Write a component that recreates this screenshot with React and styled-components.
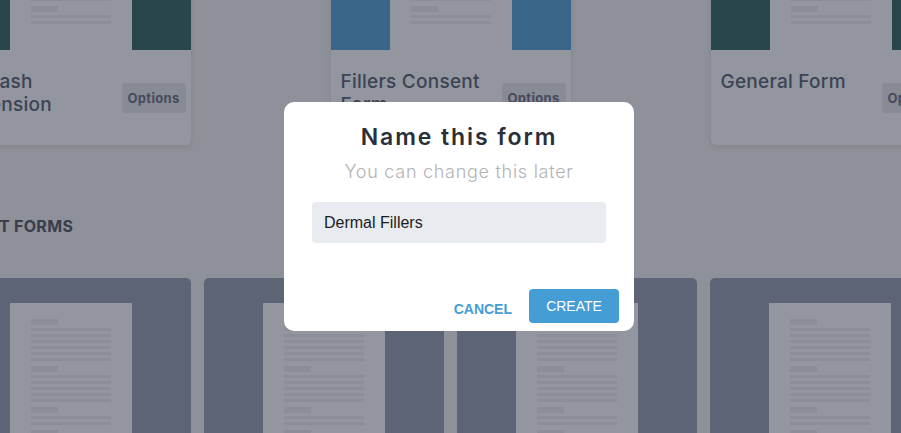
import React from "react";
import styled, { createGlobalStyle } from "styled-components";

const GlobalStyle = createGlobalStyle`
  html, body {
    margin: 0;
    padding: 0;
    overflow: hidden;
    background: #eaebed;
  }
  body {
    font-family: Inter, "Noto Sans", sans-serif;
  }
  * { box-sizing: border-box; }
`;

const Viewport = styled.div`
  width: 100vw;
  height: 100vh;
  overflow: hidden;
  position: relative;
`;

const Page = styled.main`
  width: 1000px;
  margin-left: calc(50% - 500px);
  margin-top: -110px;
`;

const FeaturedRow = styled.section`
  display: flex;
  justify-content: space-between;
`;

const FeaturedCard = styled.article`
  width: 240px;
  border-radius: 5px;
  overflow: hidden;
  background: #f3f4f6;
  box-shadow: 0 2px 6px rgba(0, 0, 0, 0.1);
`;

const Thumb = styled.div`
  height: 160px;
  padding-top: 25px;
  display: flex;
  justify-content: center;
  background: ${(p) => p.$tone};
`;

const CardBody = styled.div`
  height: 95px;
  display: flex;
  align-items: center;
  justify-content: space-between;
  padding: 0 5px 0 10px;
`;

const CardTitle = styled.h3`
  align-self: flex-start;
  margin: 20px 0 0;
  max-width: 160px;
  font-size: 19px;
  line-height: 23px;
  font-weight: 500;
  letter-spacing: 0.25px;
  color: #535d72;
`;

const OptionsButton = styled.button`
  flex: none;
  width: 64px;
  height: 30px;
  border: none;
  border-radius: 4px;
  background: #dfe0e4;
  color: #656c80;
  font-family: Inter, "Noto Sans", sans-serif;
  font-size: 13px;
  font-weight: 700;
  letter-spacing: 0.3px;
  padding: 0;
`;

const SectionHeading = styled.h2`
  margin: 71px 0 0 -7px;
  font-size: 16px;
  line-height: 20px;
  font-weight: 700;
  letter-spacing: 0.3px;
  color: #51545e;
`;

const RecentRow = styled.section`
  margin-top: 42px;
  display: flex;
  justify-content: space-between;
`;

const RecentCard = styled.article`
  width: 240px;
  height: 200px;
  padding-top: 25px;
  border-radius: 5px;
  overflow: hidden;
  display: flex;
  justify-content: center;
  background: #909aac;
`;

const Sheet = styled.div`
  width: 122px;
  padding: 16px 21px 26px;
  background: #f3f4f6;
  display: flex;
  flex-direction: column;
  justify-content: ${(p) => (p.$anchor === "bottom" ? "flex-end" : "flex-start")};
  gap: 5px;
  overflow: hidden;
`;

const Para = styled.div`
  flex: none;
  display: flex;
  flex-direction: column;
  gap: 3px;
`;

const ParaHead = styled.div`
  width: 27px;
  height: 6px;
  background: #e4e6ea;
`;

const ParaLine = styled.div`
  height: 3px;
  background: #e4e6ea;
`;

const Backdrop = styled.div`
  position: fixed;
  inset: 0;
  background: rgba(30, 35, 50, 0.45);
  display: flex;
  align-items: center;
  justify-content: center;
  padding-left: 17px;
`;

const Dialog = styled.div`
  width: 350px;
  background: #ffffff;
  border-radius: 10px;
  padding: 21px 15px 8px;
  display: flex;
  flex-direction: column;
`;

const DialogMain = styled.div`
  padding: 0 13px;
  display: flex;
  flex-direction: column;
  align-items: stretch;
`;

const DialogTitle = styled.h1`
  margin: 0;
  text-align: center;
  font-size: 23px;
  line-height: 28px;
  font-weight: 600;
  letter-spacing: 1.9px;
  color: #2b2f3a;
`;

const DialogSubtitle = styled.p`
  margin: 10px 0 0;
  text-align: center;
  font-size: 18px;
  line-height: 22px;
  font-weight: 300;
  letter-spacing: 0.72px;
  color: #b2b2b5;
`;

const NameInput = styled.input`
  margin-top: 19px;
  height: 41px;
  width: 100%;
  border: none;
  outline: none;
  border-radius: 4px;
  background: #e8ebef;
  padding: 0 12px;
  font-family: "Liberation Sans", Arial, sans-serif;
  font-size: 16px;
  color: #1c1c1c;
`;

const DialogFooter = styled.div`
  margin-top: 46px;
  display: flex;
  justify-content: flex-end;
  align-items: center;
  gap: 17px;
`;

const TextButton = styled.button`
  border: none;
  background: none;
  padding: 6px 0 0;
  font-family: "Liberation Sans", Arial, sans-serif;
  font-size: 14px;
  font-weight: 700;
  color: #459dd5;
`;

const PrimaryButton = styled.button`
  width: 90px;
  height: 34px;
  border: none;
  border-radius: 4px;
  background: #459dd5;
  color: #ffffff;
  padding: 0;
  font-family: "Liberation Sans", Arial, sans-serif;
  font-size: 14px;
  font-weight: 400;
`;

const groups = [6, 5, 2, 5, 6, 2];

function DocPreview({ anchor }) {
  return (
    <Sheet $anchor={anchor}>
      {groups.map((n, i) => (
        <Para key={i}>
          <ParaHead />
          {Array.from({ length: n }).map((_, j) => (
            <ParaLine key={j} />
          ))}
        </Para>
      ))}
    </Sheet>
  );
}

const featured = [
  { title: "Eyelash Extension", tone: "#306361" },
  { title: "Fillers Consent Form", tone: "#4f9dd0" },
  { title: "General Form", tone: "#306361" },
];

export default function App() {
  return (
    <Viewport>
      <GlobalStyle />
      <Page>
        <FeaturedRow>
          {featured.map((f) => (
            <FeaturedCard key={f.title}>
              <Thumb $tone={f.tone}>
                <DocPreview anchor="bottom" />
              </Thumb>
              <CardBody>
                <CardTitle>{f.title}</CardTitle>
                <OptionsButton>Options</OptionsButton>
              </CardBody>
            </FeaturedCard>
          ))}
        </FeaturedRow>
        <SectionHeading>RECENT FORMS</SectionHeading>
        <RecentRow>
          {[0, 1, 2, 3].map((i) => (
            <RecentCard key={i}>
              <DocPreview anchor="top" />
            </RecentCard>
          ))}
        </RecentRow>
      </Page>
      <Backdrop>
        <Dialog role="dialog">
          <DialogMain>
            <DialogTitle>Name this form</DialogTitle>
            <DialogSubtitle>You can change this later</DialogSubtitle>
            <NameInput defaultValue="Dermal Fillers" />
          </DialogMain>
          <DialogFooter>
            <TextButton>CANCEL</TextButton>
            <PrimaryButton>CREATE</PrimaryButton>
          </DialogFooter>
        </Dialog>
      </Backdrop>
    </Viewport>
  );
}
